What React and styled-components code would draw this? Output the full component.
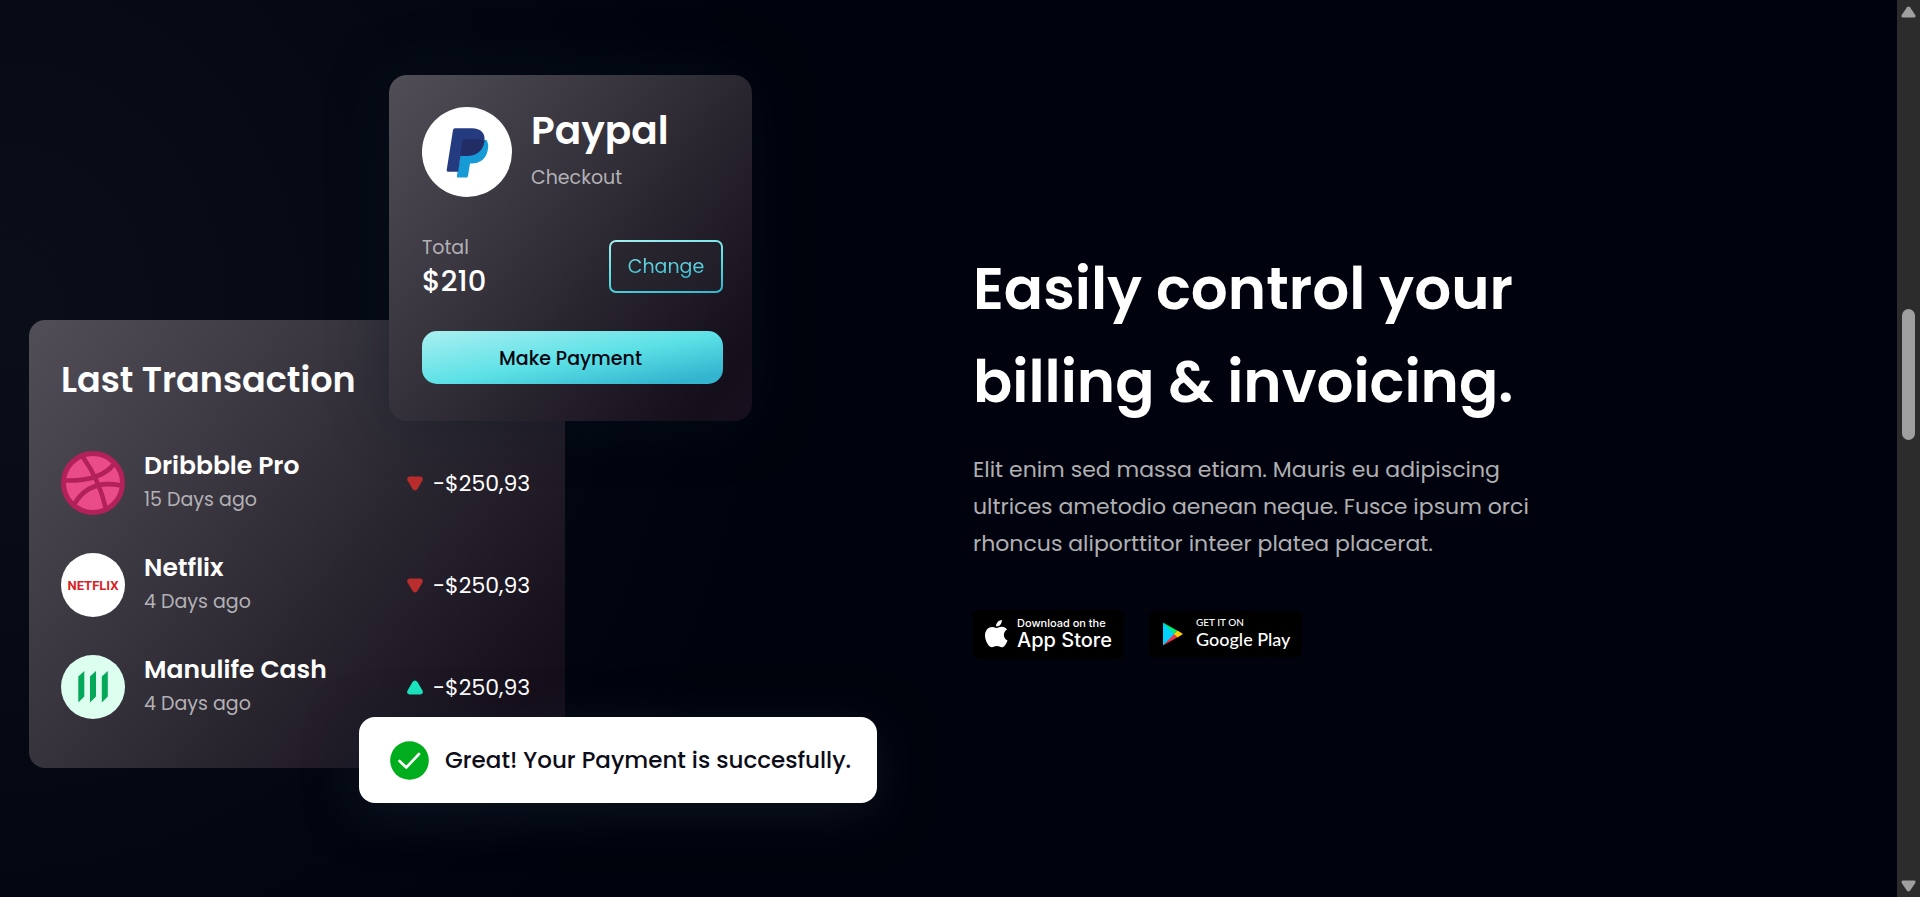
import React from "react";
import styled, { createGlobalStyle } from "styled-components";

const GlobalStyle = createGlobalStyle`
  *, *::before, *::after { box-sizing: border-box; }
  body {
    margin: 0;
    background: #00030d;
    color: #fff;
    font-family: Poppins, Inter, "Liberation Sans", sans-serif;
  }
  h1, h2, h3, p, ul { margin: 0; padding: 0; }
`;

const Page = styled.div`
  display: flex;
  min-height: 100vh;
  background:
    radial-gradient(ellipse 800px 860px at 0 34%, rgba(28, 38, 48, 0.34), transparent),
    #00030d;
`;

const Section = styled.main`
  flex: 1;
  display: grid;
  grid-template-columns: 1fr 1fr;
  column-gap: 48px;
  align-items: center;
  padding: 75px 28px 94px 29px;
`;

const Showcase = styled.div`
  position: relative;
  padding: 245px 0 35px;
`;

const Panel = styled.section`
  background: linear-gradient(128deg, #524e57 0%, #2f2c35 50%, #150e1b 90%, #170f1d 100%);
`;

const Transactions = styled(Panel)`
  width: 536px;
  height: 448px;
  padding: 33px 32px 0;
  border-radius: 16px;
`;

const PanelTitle = styled.h2`
  font-size: 35px;
  font-weight: 600;
  line-height: 54px;
`;

const List = styled.ul`
  list-style: none;
  display: grid;
  row-gap: 38px;
  padding-top: 44px;
`;

const Row = styled.li`
  display: grid;
  grid-template-columns: 64px 1fr 126px;
  grid-template-rows: 64px;
  column-gap: 19px;
  align-items: center;
`;

const RowText = styled.div`
  display: grid;
  row-gap: 2px;
`;

const Name = styled.h3`
  font-size: 25px;
  font-weight: 600;
  line-height: 32px;
`;

const Muted = styled.p`
  font-size: 19px;
  line-height: ${(p) => p.$leading || 32}px;
  color: #b3b1b6;
`;

const Amount = styled.span`
  display: flex;
  align-items: center;
  gap: 10px;
  font-size: 22px;
  white-space: nowrap;
`;

const Checkout = styled(Panel)`
  position: absolute;
  top: 0;
  left: 360px;
  width: 363px;
  height: 346px;
  padding: 32px 29px 0 33px;
  border-radius: 18px;
  box-shadow: 0 0 60px rgba(10, 22, 38, 0.4);
`;

const Merchant = styled.header`
  display: flex;
  gap: 19px;
  height: 90px;
`;

const MerchantName = styled.h2`
  font-size: 39px;
  font-weight: 600;
  line-height: 48px;
`;

const MerchantText = styled.div`
  display: grid;
  align-content: start;
  row-gap: 7px;
`;

const TotalRow = styled.div`
  display: flex;
  justify-content: space-between;
  align-items: center;
  height: 64px;
  margin: 37px 0 33px;
`;

const Total = styled.strong`
  display: block;
  font-size: 29px;
  font-weight: 500;
  line-height: 36px;
`;

const ChangeButton = styled.button`
  width: 114px;
  height: 53px;
  border: 2px solid transparent;
  border-radius: 7px;
  background:
    linear-gradient(128deg, #2a2730, #211d28) padding-box,
    linear-gradient(170deg, #a4eef0, #5ce1e6 50%, #2fb4cd) border-box;
  font: 400 19px Poppins, Inter, sans-serif;
  padding: 0;
`;

const ChangeLabel = styled.span`
  background: linear-gradient(#7be6ea, #35b8cf);
  background-clip: text;
  color: transparent;
`;

const PayButton = styled.button`
  display: block;
  width: 100%;
  height: 53px;
  border: 0;
  border-radius: 15px;
  background: linear-gradient(170deg, #a7eff1 2%, #5ce1e6 52%, #33b5cf 90%);
  color: #020510;
  font: 500 19px Poppins, Inter, sans-serif;
  padding: 1px 4px 0 0;
`;

const Toast = styled.div`
  position: absolute;
  left: 330px;
  bottom: 0;
  display: flex;
  align-items: center;
  gap: 16px;
  width: 518px;
  height: 86px;
  padding-left: 31px;
  border-radius: 16px;
  background: #fff;
  color: #0d0d18;
  font-size: 23px;
  font-weight: 500;
  white-space: nowrap;
  box-shadow: 0 10px 50px rgba(24, 36, 52, 0.5);
`;

const Copy = styled.div`
  margin-top: 22px;
`;

const Heading = styled.h1`
  font-size: 58px;
  font-weight: 600;
  line-height: 93px;
`;

const Lead = styled.p`
  max-width: 560px;
  margin-top: 23px;
  font-size: 22px;
  line-height: 37px;
  color: #b0b0b3;
`;

const Line = styled.span`
  display: block;
  white-space: nowrap;
`;

const Badges = styled.div`
  display: flex;
  align-items: center;
  gap: 25px;
  margin-top: 48px;
`;

const Badge = styled.a`
  display: flex;
  align-items: center;
  gap: ${(p) => p.$gap}px;
  width: ${(p) => p.$width}px;
  height: ${(p) => p.$height}px;
  padding-left: ${(p) => p.$inset}px;
  border-radius: 6px;
  background: #000;
  color: #fff;
  text-decoration: none;
  white-space: nowrap;
`;

const BadgeText = styled.span`
  display: grid;
  padding-bottom: ${(p) => p.$lift || 0}px;
  font-family: ${(p) => p.$family};
`;

const BadgeSmall = styled.span`
  font-size: ${(p) => p.$size}px;
  font-weight: 500;
  line-height: 13px;
`;

const BadgeLarge = styled.span`
  font-size: ${(p) => p.$size}px;
  font-weight: 500;
  line-height: 21px;
`;

const Scrollbar = styled.div`
  display: flex;
  flex-direction: column;
  align-items: center;
  width: 23px;
  padding: 6px 0 5px;
  background: #2c2c2c;
`;

const Track = styled.div`
  flex: 1;
  width: 13px;
  padding-top: 291px;
`;

const Thumb = styled.div`
  height: 131px;
  border-radius: 7px;
  background: #9f9f9f;
`;

const NetflixMark = styled.span`
  display: grid;
  place-items: center;
  width: 64px;
  height: 64px;
  border-radius: 50%;
  background: #fff;
  color: #d81f26;
  font: 700 13px Roboto, "Liberation Sans", sans-serif;
`;

function Arrow({ up }) {
  return (
    <svg width="15" height="12" viewBox="0 0 15 12" aria-hidden="true">
      <path
        transform={up ? undefined : "rotate(180 7.5 6)"}
        d="M6 1.2Q7.5 -.4 9 1.2L14.3 9Q15 11.6 13 11.6H2Q0 11.6.7 9Z"
        fill="#9f9f9f"
      />
    </svg>
  );
}

function Trend({ up }) {
  return (
    <svg width="16" height="15" viewBox="0 0 16 15" aria-hidden="true">
      <path
        transform={up ? "rotate(180 8 7.5)" : undefined}
        d="M2.6.4H13.4Q16.6.9 15.6 4.2L10.6 12.8Q8 16 5.4 12.8L.4 4.2Q-.6.9 2.6.4Z"
        fill={up ? "#1be7c0" : "#b92d2d"}
      />
    </svg>
  );
}

function PaypalLogo() {
  return (
    <svg width="90" height="90" viewBox="0 0 90 90" role="img" aria-label="PayPal">
      <circle cx="45" cy="45" r="45" fill="#fff" />
      <path d="M41 33H64.5Q67 37 65.8 43C64 52 58 56.500 49.500 56.500H48L46 69Q45.700 70.500 44.200 70.500H36Q34.600 70.500 34.900 69Z" fill="#179bd7" />
      <path d="M33 21.200H50C58.500 21.200 64 26 62.300 35C60.500 44.500 54 49 45 49H38.500L36.200 64.800H26Q24.400 64.800 24.700 63L31 23Q31.300 21.200 33 21.200Z" fill="#253b80" />
      <path d="M42.500 32.300H58Q60.500 32.300 62.300 34.200V35C60.500 44.500 54 48.500 45 48.500H38.300L40.500 34Q40.800 32.300 42.500 32.300Z" fill="#222d65" />
    </svg>
  );
}

function DribbbleLogo() {
  return (
    <svg width="64" height="64" viewBox="0 0 64 64" role="img" aria-label="Dribbble">
      <circle cx="32" cy="32" r="29.500" fill="#ea4c89" stroke="#b2215a" strokeWidth="5" />
      <path
        d="M4 29.500C23 30 42 27.500 53 13M21.500 5.500C32 20 40 36 45 58M13.500 53C23 36.500 38 30 60 34.500"
        fill="none"
        stroke="#b2215a"
        strokeWidth="4.600"
      />
    </svg>
  );
}

function ManulifeLogo() {
  return (
    <svg width="64" height="64" viewBox="0 0 64 64" role="img" aria-label="Manulife">
      <circle cx="32" cy="32" r="32" fill="#dcfff0" />
      <path
        d="M17.300 21.500L23.300 16V41.500L17.300 47.500ZM29 21.500L35 16V41.500L29 47.500ZM40.800 21.500L46.800 16V41.500L40.800 47.500Z"
        fill="#05a758"
      />
    </svg>
  );
}

function CheckIcon() {
  return (
    <svg width="39" height="39" viewBox="0 0 39 39" aria-hidden="true">
      <circle cx="19.500" cy="19.500" r="19.300" fill="#00ad1c" />
      <path d="M9.500 20L16.300 26.500L29 13" fill="none" stroke="#fff" strokeWidth="2.600" strokeLinecap="round" strokeLinejoin="round" />
    </svg>
  );
}

function AppleLogo() {
  return (
    <svg width="23" height="28" viewBox="0 0 23 28" aria-hidden="true">
      <path
        d="M18.900 14.800C18.900 12.200 20.200 10.600 22 9.400C20.800 7.700 19 6.900 17 6.800C14.900 6.600 13 8 11.900 8C10.800 8 9.100 6.800 7.300 6.900C3.400 7 0 10 0 15.400C0 20.500 3.700 27.300 7 27.300C8.700 27.300 9.600 26.100 11.900 26.100C14.200 26.100 14.900 27.300 16.700 27.300C19.200 27.300 21.600 23.600 22.500 20.500C20.200 19.500 18.900 17.500 18.900 14.800ZM15.300 4.800C16.400 3.500 17 1.800 16.900 0C15.200.1 13.500 1 12.500 2.200C11.500 3.300 10.900 4.900 11.100 6.500C12.800 6.600 14.300 5.900 15.300 4.800Z"
        fill="#fff"
      />
    </svg>
  );
}

function PlayLogo() {
  return (
    <svg width="20" height="24" viewBox="0 0 20 24" aria-hidden="true">
      <path d="M0 .4L12.200 12L0 23.600Z" fill="#00d2ff" />
      <path d="M0 .4L14.500 8.800L11.200 12Z" fill="#00ee76" />
      <path d="M0 23.600L14.500 15.200L11.200 12Z" fill="#f63448" />
      <path d="M14.500 8.600L20 12L14.500 15.400L11 12Z" fill="#ffd000" />
    </svg>
  );
}

const transactions = [
  { name: "Dribbble Pro", when: "15 Days ago", logo: <DribbbleLogo /> },
  { name: "Netflix", when: "4 Days ago", logo: <NetflixMark>NETFLIX</NetflixMark> },
  { name: "Manulife Cash", when: "4 Days ago", logo: <ManulifeLogo />, up: true },
];

export default function App() {
  return (
    <Page>
      <GlobalStyle />
      <Section>
        <Showcase>
          <Transactions>
            <PanelTitle>Last Transaction</PanelTitle>
            <List>
              {transactions.map((t) => (
                <Row key={t.name}>
                  {t.logo}
                  <RowText>
                    <Name>{t.name}</Name>
                    <Muted>{t.when}</Muted>
                  </RowText>
                  <Amount>
                    <Trend up={t.up} />
                    -$250,93
                  </Amount>
                </Row>
              ))}
            </List>
          </Transactions>
          <Checkout>
            <Merchant>
              <PaypalLogo />
              <MerchantText>
                <MerchantName>Paypal</MerchantName>
                <Muted>Checkout</Muted>
              </MerchantText>
            </Merchant>
            <TotalRow>
              <div>
                <Muted $leading={30}>Total</Muted>
                <Total>$210</Total>
              </div>
              <ChangeButton type="button">
                <ChangeLabel>Change</ChangeLabel>
              </ChangeButton>
            </TotalRow>
            <PayButton type="button">Make Payment</PayButton>
          </Checkout>
          <Toast role="status">
            <CheckIcon />
            Great! Your Payment is succesfully.
          </Toast>
        </Showcase>
        <Copy>
          <Heading>
            <Line>Easily control your</Line>
            <Line>billing &amp; invoicing.</Line>
          </Heading>
          <Lead>
            <Line>Elit enim sed massa etiam. Mauris eu adipiscing</Line>
            <Line>ultrices ametodio aenean neque. Fusce ipsum orci</Line>
            <Line>rhoncus aliporttitor inteer platea placerat.</Line>
          </Lead>
          <Badges>
            <Badge href="#app-store" $width={151} $height={49} $inset={12} $gap={9}>
              <AppleLogo />
              <BadgeText $family='Inter, "Liberation Sans", sans-serif'>
                <BadgeSmall $size={11}>Download on the</BadgeSmall>
                <BadgeLarge $size={20}>App Store</BadgeLarge>
              </BadgeText>
            </Badge>
            <Badge href="#google-play" $width={153} $height={46} $inset={14} $gap={13}>
              <PlayLogo />
              <BadgeText $lift={2} $family='Lato, "Open Sans", sans-serif'>
                <BadgeSmall $size={10}>GET IT ON</BadgeSmall>
                <BadgeLarge $size={18}>Google Play</BadgeLarge>
              </BadgeText>
            </Badge>
          </Badges>
        </Copy>
      </Section>
      <Scrollbar aria-hidden="true">
        <Arrow up />
        <Track>
          <Thumb />
        </Track>
        <Arrow />
      </Scrollbar>
    </Page>
  );
}
